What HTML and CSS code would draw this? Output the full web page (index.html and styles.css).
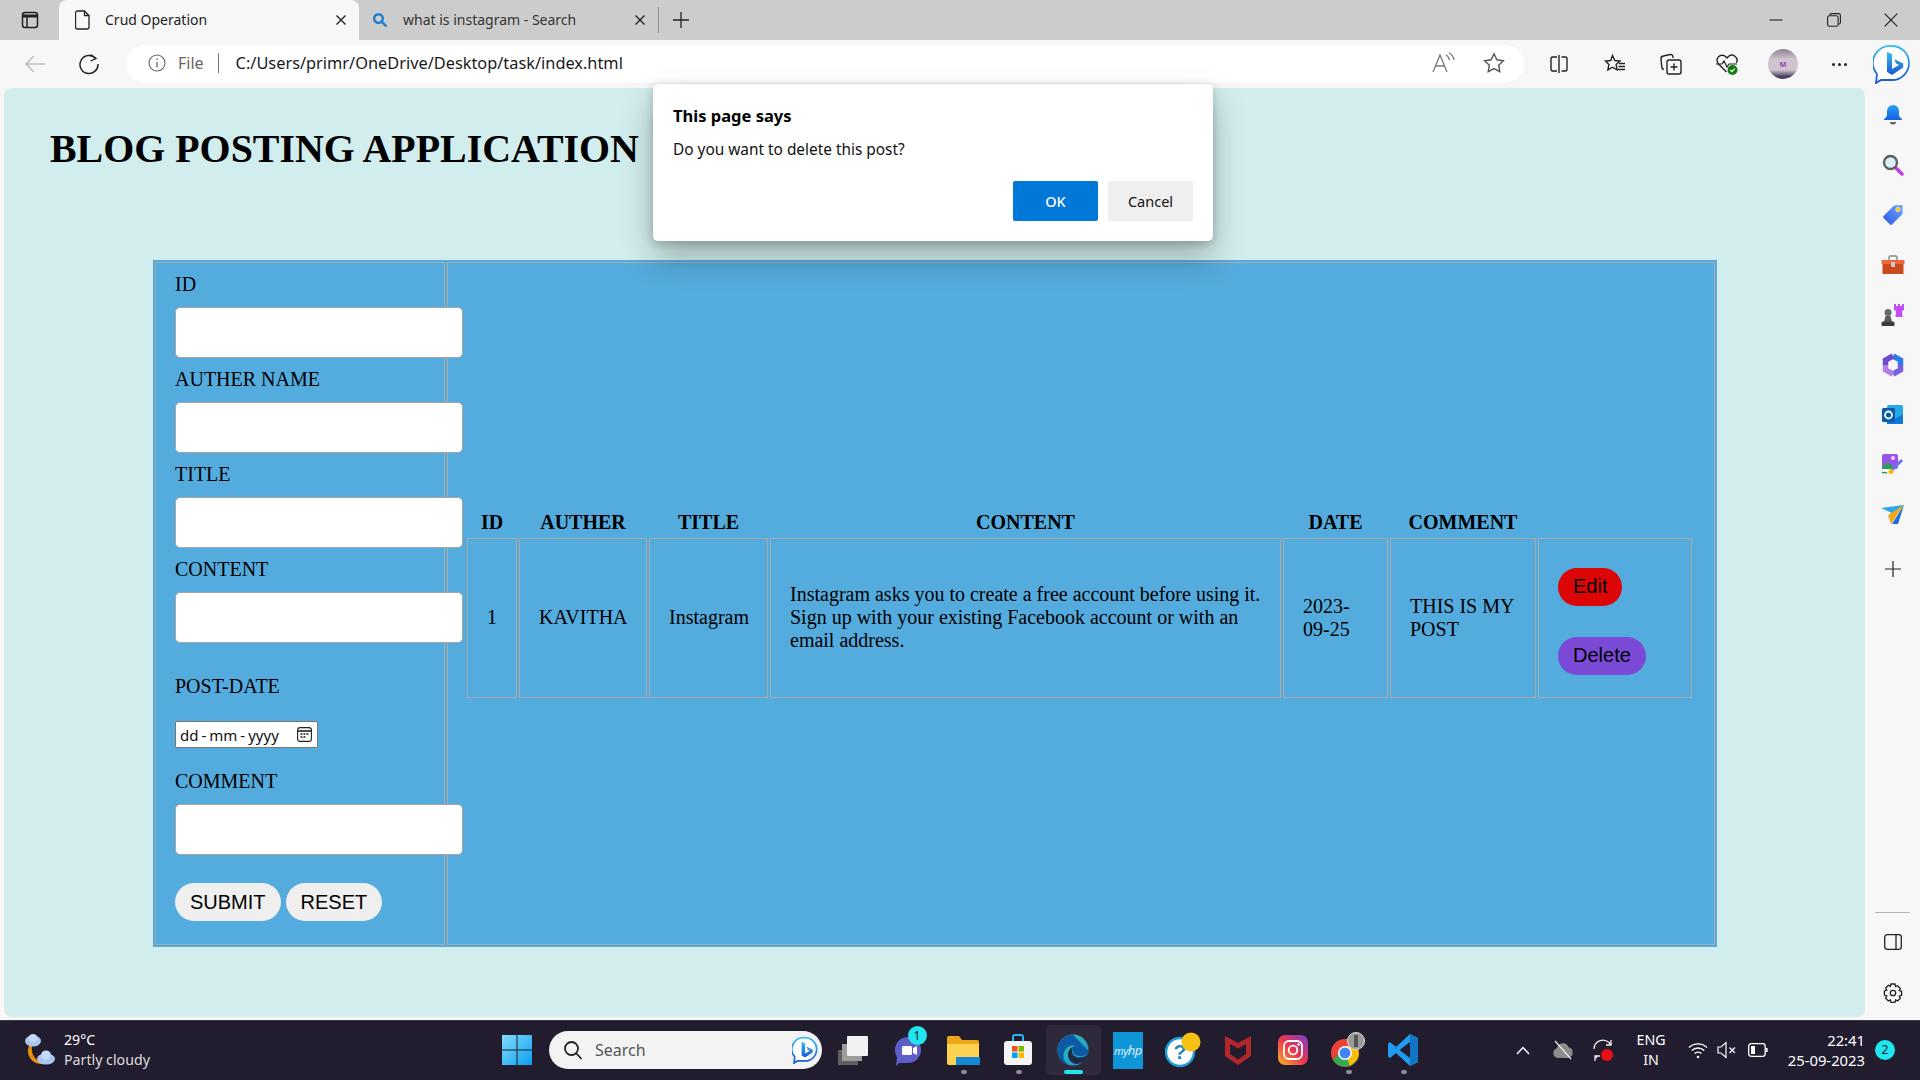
FILE: index.html
```html
<!DOCTYPE html>
<html lang="en">
<head>
    <meta charset="UTF-8">
    <title>Crud Operation</title>
    <link rel="stylesheet" href="styles.css">
</head>
<body>
    <div class="screen">
        <!-- browser tabs -->
        <div class="tabstrip">
            <div class="tab-slot">
                <svg width="18" height="18" viewBox="0 0 18 18" fill="none" stroke="#222" stroke-width="1.5"><rect x="1.5" y="1.5" width="15" height="15" rx="2.5"/><path d="M1.5 5h15" stroke-width="3"/><path d="M6 5v11"/></svg>
            </div>
            <div class="tab tab-active">
                <svg width="16" height="20" viewBox="0 0 16 20" fill="none" stroke="#222" stroke-width="1.3"><path d="M2.5 1h7l4.500 4.500V17a2 2 0 0 1-2 2h-9.500a2 2 0 0 1-2-2V3a2 2 0 0 1 2-2z"/><path d="M9.500 1v4.500H14"/></svg>
                <span class="tab-title">Crud Operation</span>
                <span class="tab-close"><svg width="12" height="12" viewBox="0 0 12 12" stroke="#222" stroke-width="1.4"><path d="M1.500 1.500l9 9M10.500 1.500l-9 9"/></svg></span>
            </div>
            <div class="tab">
                <svg width="16" height="16" viewBox="0 0 16 16" fill="none" stroke="#1c7fd0" stroke-width="2.4"><circle cx="6.500" cy="6.500" r="4.300"/><path d="M10 10l4.500 4.500"/></svg>
                <span class="tab-title tab-title-dim">what is instagram - Search</span>
                <span class="tab-close"><svg width="12" height="12" viewBox="0 0 12 12" stroke="#222" stroke-width="1.4"><path d="M1.500 1.500l9 9M10.500 1.500l-9 9"/></svg></span>
            </div>
            <div class="tab-sep"></div>
            <div class="tab-new"><svg width="18" height="18" viewBox="0 0 18 18" stroke="#222" stroke-width="1.3"><path d="M9 1v16M1 9h16"/></svg></div>
            <div class="win-controls">
                <span class="win-btn"><svg width="14" height="14" viewBox="0 0 14 14" stroke="#222" stroke-width="1.1"><path d="M0.500 7h13"/></svg></span>
                <span class="win-btn"><svg width="14" height="14" viewBox="0 0 14 14" fill="none" stroke="#222" stroke-width="1.1"><rect x="0.600" y="2.800" width="10.500" height="10.500" rx="1.800"/><path d="M3 2.600V2a1.400 1.400 0 0 1 1.400-1.400h7.200A1.800 1.800 0 0 1 13.400 2.400v7.200A1.400 1.400 0 0 1 12 11h-0.700"/></svg></span>
                <span class="win-btn"><svg width="14" height="14" viewBox="0 0 14 14" stroke="#222" stroke-width="1.2"><path d="M0.700 0.700l12.600 12.600M13.300 0.700L0.700 13.300"/></svg></span>
            </div>
        </div>

        <!-- address bar -->
        <div class="toolbar">
            <div class="nav-btn"><svg width="22" height="20" viewBox="0 0 22 20" fill="none" stroke="#bdbdbd" stroke-width="1.5"><path d="M21 10H2M10 2l-8 8 8 8"/></svg></div>
            <div class="nav-btn"><svg width="22" height="22" viewBox="0 0 22 22" fill="none" stroke="#222" stroke-width="1.500"><path d="M17.800 5.600A9 9 0 1 0 20 11"/><path d="M12.500 1.500l5.500 4-5.500 2.500" stroke-width="1.300"/></svg></div>
            <div class="urlbar">
                <svg class="url-info" width="18" height="18" viewBox="0 0 18 18" fill="none" stroke="#666" stroke-width="1.100"><circle cx="9" cy="9" r="8"/><path d="M9 8v5.500M9 4.500v1.500" stroke-width="1.300"/></svg>
                <span class="url-file">File</span>
                <span class="url-sep"></span>
                <span class="url-text">C:/Users/primr/OneDrive/Desktop/task/index.html</span>
                <span class="url-action url-action-first"><svg width="24" height="24" viewBox="0 0 24 24" fill="none" stroke="#777" stroke-width="1.300"><path d="M1 21L8 4l7 17M3.600 15h8.800"/><path d="M14 4c2 1 3 2.500 3.300 5M17 1.800c3 1.700 4.500 4 5 7.200"/></svg></span>
                <span class="url-action"><svg width="22" height="22" viewBox="0 0 22 22" fill="none" stroke="#555" stroke-width="1.400"><path d="M11 1.800l2.900 6 6.500 0.900-4.700 4.500 1.100 6.500-5.800-3.100-5.800 3.100 1.100-6.500L1.600 8.700l6.500-0.900z"/></svg></span>
            </div>
            <div class="tool-btn tool-btn-first"><svg width="20" height="20" viewBox="0 0 20 20" fill="none" stroke="#222" stroke-width="1.400"><path d="M8 3H3.500A1.500 1.500 0 0 0 2 4.500v11A1.500 1.500 0 0 0 3.500 17H8M12.500 3h4A1.500 1.500 0 0 1 18 4.500v11a1.500 1.500 0 0 1-1.500 1.500h-4M10 1v18"/></svg></div>
            <div class="tool-btn"><svg width="22" height="20" viewBox="0 0 22 20" fill="none" stroke="#222" stroke-width="1.400"><path d="M8.500 1.500l2.300 5 5.200 0.600-3.900 3.500 1 5.200-4.600-2.600-4.600 2.600 1-5.200L1.500 7.100l5.200-0.600z"/><path d="M15 9.500h6M14.500 12.500h6.500M14 15.500h7"/></svg></div>
            <div class="tool-btn"><svg width="22" height="22" viewBox="0 0 22 22" fill="none" stroke="#222" stroke-width="1.400"><rect x="7" y="7" width="14" height="14" rx="2"/><path d="M14 10.500v7M10.500 14h7"/><path d="M4 16.500A2.500 2.500 0 0 1 1.800 14L1 6a2.800 2.800 0 0 1 2.500-3l6.500-1.500A2.500 2.500 0 0 1 13 3.500V5"/></svg></div>
            <div class="tool-btn"><svg width="24" height="24" viewBox="0 0 24 24" fill="none" stroke="#222" stroke-width="1.400"><path d="M11.500 20L3.500 12a5.200 5.200 0 0 1 0-7.300 5.200 5.200 0 0 1 7.300 0l1.200 1.300 1.200-1.300a5.200 5.200 0 0 1 8.300 6"/><path d="M1 12h6l2-3 3 6 2-3h8" stroke-width="1.200"/><circle cx="17.500" cy="18" r="5" fill="#107c10" stroke="none"/><path d="M15.200 18l1.700 1.700 2.900-3" stroke="#fff" stroke-width="1.200"/></svg></div>
            <div class="tool-btn"><span class="avatar"><span class="avatar-mark">M</span></span></div>
            <div class="tool-btn"><span class="dots"><i></i><i></i><i></i></span></div>
            <div class="tool-btn tool-btn-last">
                <svg width="38" height="40" viewBox="0 0 38 40" fill="none"><defs><linearGradient id="bingA" x1="0" y1="0" x2="0" y2="1"><stop offset="0" stop-color="#37bdf0"/><stop offset="1" stop-color="#1a55d8"/></linearGradient></defs><path d="M19 2a17 17 0 0 1 0 34H8l-5 3 1-9A17 17 0 0 1 19 2z" fill="#fff" stroke="url(#bingA)" stroke-width="1.800"/><path d="M14 8l5 2v15l7-4-3-1.500-1.800-4.500 9 4.500v4L19 31l-5-3z" fill="url(#bingA)"/></svg>
            </div>
        </div>

        <div class="main-row">
            <!-- the page itself -->
            <div class="page">
                <h1 class="page-title">BLOG POSTING APPLICATION</h1>
                <table class="layout-table">
                    <tr>
                        <td class="form-cell">
                            <label class="field-label">ID</label>
                            <input class="field-input" type="text">
                            <label class="field-label">AUTHER NAME</label>
                            <input class="field-input" type="text">
                            <label class="field-label">TITLE</label>
                            <input class="field-input" type="text">
                            <label class="field-label">CONTENT</label>
                            <input class="field-input" type="text">
                            <label class="field-label field-label-date">POST-DATE</label>
                            <div class="date-input">
                                <span>dd</span><span class="date-dash">-</span><span>mm</span><span class="date-dash">-</span><span>yyyy</span>
                                <svg class="date-icon" width="15" height="15" viewBox="0 0 15 15" fill="none" stroke="#222" stroke-width="1.100"><rect x="0.600" y="0.600" width="13.800" height="13.800" rx="2.500"/><path d="M0.600 4h13.800" stroke-width="1.600"/><path d="M3.500 7h2M6.500 7h2M9.500 7h2M3.500 10h2M6.500 10h2" stroke-width="1.500"/></svg>
                            </div>
                            <label class="field-label">COMMENT</label>
                            <input class="field-input" type="text">
                            <div class="form-actions">
                                <button class="pill-btn">SUBMIT</button>
                                <button class="pill-btn">RESET</button>
                            </div>
                        </td>
                        <td class="list-cell">
                            <table class="post-table">
                                <thead>
                                    <tr>
                                        <th class="col-id">ID</th>
                                        <th class="col-auther">AUTHER</th>
                                        <th class="col-title">TITLE</th>
                                        <th class="col-content">CONTENT</th>
                                        <th class="col-date">DATE</th>
                                        <th class="col-comment">COMMENT</th>
                                        <th class="col-actions"></th>
                                    </tr>
                                </thead>
                                <tbody>
                                    <tr>
                                        <td class="cell-center">1</td>
                                        <td class="cell-center">KAVITHA</td>
                                        <td class="cell-center">Instagram</td>
                                        <td>Instagram asks you to create a free account before using it. Sign up with your existing Facebook account or with an email address.</td>
                                        <td>2023-09-25</td>
                                        <td>THIS IS MY POST</td>
                                        <td class="cell-actions">
                                            <div class="row-actions">
                                                <button class="pill-btn btn-edit">Edit</button>
                                                <button class="pill-btn btn-delete">Delete</button>
                                            </div>
                                        </td>
                                    </tr>
                                </tbody>
                            </table>
                        </td>
                    </tr>
                </table>
            </div>

            <!-- edge sidebar -->
            <div class="sidebar">
                <div class="side-icon"><svg width="20" height="22" viewBox="0 0 20 22"><defs><linearGradient id="bellG" x1="0" y1="0" x2="0" y2="1"><stop offset="0" stop-color="#2aa0f5"/><stop offset="1" stop-color="#1460e0"/></linearGradient></defs><path d="M10 1a6 6 0 0 1 6 6v5l3.500 4h-19L4 12V7a6 6 0 0 1 6-6z" fill="url(#bellG)"/><path d="M7 18h6a3 2.500 0 0 1-6 0z" fill="#666"/></svg></div>
                <div class="side-icon"><svg width="22" height="22" viewBox="0 0 22 22" fill="none"><path d="M13 13l7 7" stroke="#c13ee6" stroke-width="3.500" stroke-linecap="round"/><circle cx="8.500" cy="8.500" r="6.500" fill="#dceefa" stroke="#5f5f5f" stroke-width="2.400"/></svg></div>
                <div class="side-icon"><svg width="22" height="22" viewBox="0 0 22 22"><defs><linearGradient id="tagG" x1="0" y1="1" x2="1" y2="0"><stop offset="0" stop-color="#2e55e8"/><stop offset="1" stop-color="#6fa8f5"/></linearGradient></defs><path d="M1.500 12L12 1.500 20.500 1v9L10 20.500a1.500 1.500 0 0 1-2 0L1.500 14a1.500 1.500 0 0 1 0-2z" fill="url(#tagG)"/><circle cx="16" cy="5.500" r="2.300" fill="#f5c518" stroke="#fff" stroke-width="0.500"/></svg></div>
                <div class="side-icon"><svg width="24" height="20" viewBox="0 0 24 20"><path d="M8 5V2.500A1.500 1.500 0 0 1 9.500 1h5A1.500 1.500 0 0 1 16 2.500V5" fill="none" stroke="#8a8a8a" stroke-width="1.500"/><path d="M0.500 5h23v4H0.500z" fill="#f0653a"/><path d="M1.500 9h21v10h-21z" fill="#c94a1e"/><rect x="10" y="7" width="4" height="5" fill="#c9c9c9"/></svg></div>
                <div class="side-icon"><svg width="24" height="24" viewBox="0 0 24 24"><path d="M13 1h2v2h2V1h2v2h2V1h2v6l-2 1 0.500 6H14.500L15 8l-2-1z" fill="#c24df0"/><circle cx="7" cy="9.500" r="3.500" fill="#6a6a6a"/><path d="M4.500 13h5l1.500 6H3z" fill="#5a5a5a"/><rect x="0.500" y="18.500" width="13" height="4.500" rx="1.500" fill="#3c3c3c"/></svg></div>
                <div class="side-icon"><svg width="22" height="24" viewBox="0 0 22 24" fill="none"><path d="M11 3L18.500 7.200V12" stroke="#2c7de6" stroke-width="5.500"/><path d="M18.500 12v4.800L11 21" stroke="#7a5fe0" stroke-width="5.500"/><path d="M11 21L3.500 16.800V12" stroke="#b27fe6" stroke-width="5.500"/><path d="M3.500 12V7.200L11 3" stroke="#6a4cd0" stroke-width="5.500"/></svg></div>
                <div class="side-icon"><svg width="22" height="22" viewBox="0 0 22 22"><rect x="5" y="1" width="16" height="19" rx="1.500" fill="#28a8ea"/><path d="M5 10l8 5 8-5v10H5z" fill="#0f78d4"/><rect x="0" y="4" width="13" height="14" rx="1.500" fill="#0a5cad"/><circle cx="6.500" cy="11" r="3.500" fill="none" stroke="#fff" stroke-width="1.800"/></svg></div>
                <div class="side-icon"><svg width="24" height="24" viewBox="0 0 24 24"><rect x="1" y="1" width="16" height="15" rx="2" fill="#9a55e8"/><path d="M1 14l6-5 8 7H1z" fill="#2a9d5c"/><circle cx="12" cy="5" r="2" fill="#f3d6ff"/><path d="M22 8L12 18l-2-2L20 6z" fill="#6a70f0"/><circle cx="10" cy="18.500" r="2.500" fill="#f5b60f"/><path d="M1 20c2-2 3 1 5-0.500" fill="none" stroke="#25884f" stroke-width="1.400"/></svg></div>
                <div class="side-icon"><svg width="24" height="20" viewBox="0 0 24 20"><path d="M0 3l23-3-8 10z" fill="#2ca7ee"/><path d="M23 0L7 10l3 9z" fill="#f3a81d"/><path d="M23 0L11 19l6 0z" fill="#1a6fd4"/></svg></div>
                <div class="side-icon side-plus"><svg width="16" height="16" viewBox="0 0 16 16" stroke="#222" stroke-width="1.200"><path d="M8 0v16M0 8h16"/></svg></div>
                <div class="side-bottom">
                    <div class="side-line"></div>
                    <div class="side-icon side-panel"><svg width="18" height="16" viewBox="0 0 18 16" fill="none" stroke="#222" stroke-width="1.300"><rect x="0.700" y="0.700" width="16.600" height="14.600" rx="2.500"/><path d="M12 0.700v14.600"/></svg></div>
                    <div class="side-icon side-panel"><svg width="20" height="20" viewBox="0 0 20 20" fill="none" stroke="#222" stroke-width="1.300"><path d="M8 1h4l0.600 2.600 2-0.900 2.800 2.800-1.200 2 2.400 0.800v4l-2.400 0.800 1.200 2-2.800 2.800-2-1-0.600 2.500H8l-0.600-2.500-2 1-2.800-2.800 1.200-2L1.400 12V8l2.400-0.800-1.200-2 2.800-2.800 2 0.900z"/><circle cx="10" cy="10" r="2.700"/></svg></div>
                </div>
            </div>
        </div>

        <!-- windows taskbar -->
        <div class="taskbar">
            <div class="weather">
                <svg width="32" height="34" viewBox="0 0 32 34"><path d="M12 6a14 14 0 0 0 10 24A13 13 0 1 1 12 6z" fill="#e8900c"/><ellipse cx="9" cy="8" rx="8" ry="5.500" fill="#a9c7ee"/><ellipse cx="9" cy="5" rx="4.500" ry="4" fill="#c6daf5"/><ellipse cx="22" cy="26" rx="9" ry="5.500" fill="#a9c7ee"/><ellipse cx="22" cy="22" rx="5" ry="4.500" fill="#c6daf5"/></svg>
                <div class="weather-text">
                    <span>29°C</span>
                    <span class="weather-desc">Partly cloudy</span>
                </div>
            </div>
            <div class="task-slot">
                <svg width="30" height="30" viewBox="0 0 30 30"><defs><linearGradient id="winG" x1="0" y1="0" x2="1" y2="1"><stop offset="0" stop-color="#7fdcf8"/><stop offset="1" stop-color="#0f9ef0"/></linearGradient></defs><path d="M0 0h14.500v14.500H0zM15.500 0H30v14.500H15.500zM0 15.500h14.500V30H0zM15.500 15.500H30V30H15.500z" fill="url(#winG)"/></svg>
            </div>
            <div class="task-search">
                <svg width="20" height="20" viewBox="0 0 20 20" fill="none" stroke="#222" stroke-width="1.800"><circle cx="8.500" cy="8.500" r="6.500"/><path d="M13 13l5.500 6"/></svg>
                <span class="task-search-text">Search</span>
                <svg class="task-search-bing" width="26" height="28" viewBox="0 0 38 40" fill="none"><defs><linearGradient id="bingB" x1="0" y1="0" x2="0" y2="1"><stop offset="0" stop-color="#37bdf0"/><stop offset="1" stop-color="#1a55d8"/></linearGradient></defs><path d="M19 2a17 17 0 0 1 0 34H8l-5 3 1-9A17 17 0 0 1 19 2z" fill="#fff" stroke="url(#bingB)" stroke-width="2.500"/><path d="M14 8l5 2v15l7-4-3-1.500-1.800-4.500 9 4.500v4L19 31l-5-3z" fill="url(#bingB)"/></svg>
            </div>
            <div class="task-icons">
                <div class="task-slot"><svg width="32" height="30" viewBox="0 0 32 30"><rect x="1" y="15" width="20" height="15" fill="#5f5f5f"/><rect x="5" y="9" width="20" height="17" fill="#9c9c9c"/><rect x="10" y="1" width="21" height="20" rx="1" fill="#f2f2f2"/></svg></div>
                <div class="task-slot">
                    <svg width="30" height="32" viewBox="0 0 30 32"><path d="M15 3a13 13 0 0 1 0 26H6l-3 3 1-9A13 13 0 0 1 15 3z" fill="#5b5fc7"/><rect x="9" y="12" width="10" height="9" rx="1.500" fill="#fff"/><path d="M20 14l4-2v9l-4-2z" fill="#fff"/></svg>
                    <span class="task-badge">1</span>
                </div>
                <div class="task-slot task-running"><svg width="34" height="30" viewBox="0 0 34 30"><path d="M1 3a2 2 0 0 1 2-2h10l3 4h15a2 2 0 0 1 2 2v21H1z" fill="#eda91a"/><path d="M1 9h32v19a2 2 0 0 1-2 2H3a2 2 0 0 1-2-2z" fill="#ffd351"/><path d="M10 22h24v8H10z" fill="#1587d6"/></svg></div>
                <div class="task-slot task-running"><svg width="30" height="32" viewBox="0 0 30 32"><path d="M10 7V3a2 2 0 0 1 2-2h6a2 2 0 0 1 2 2v4" fill="none" stroke="#29b6f6" stroke-width="2"/><rect x="1" y="7" width="28" height="24" rx="3" fill="#f4f4f4"/><rect x="9" y="12" width="5.500" height="5.500" fill="#f25022"/><rect x="15.500" y="12" width="5.500" height="5.500" fill="#7fba00"/><rect x="9" y="18.500" width="5.500" height="5.500" fill="#00a4ef"/><rect x="15.500" y="18.500" width="5.500" height="5.500" fill="#ffb900"/></svg></div>
                <div class="task-slot task-active"><svg width="32" height="32" viewBox="0 0 32 32"><defs><linearGradient id="edgeG" x1="0" y1="0" x2="1" y2="1"><stop offset="0" stop-color="#2fd5a5"/><stop offset="1" stop-color="#1a86d8"/></linearGradient></defs><circle cx="16" cy="16" r="15.500" fill="url(#edgeG)"/><path d="M31.500 17c0 3-3.500 5-8 5-6 0-8-3-8-6 0-2.500 2-5 2-5-6 0-11 4.500-11 11 0 4 2 7 5 8.500C5 30 0.500 24 0.500 16 0.500 7 7.500 0.500 16 0.500" fill="#0c59a4"/><path d="M16 13c-3 1-5 4-5 8 0 4 3 8 8 9 6 0 11-4 12.500-11-2 3-5 4.500-9 4.500-4 0-7.500-2.500-7.500-6 0-2 0.500-3.500 1.500-4.500z" fill="#1f2a44"/></svg></div>
                <div class="task-slot"><div class="hp-logo">my<b>hp</b></div></div>
                <div class="task-slot"><svg width="36" height="36" viewBox="0 0 36 36"><circle cx="15" cy="20" r="14" fill="#fff" stroke="#1e9ad6" stroke-width="2.500"/><text x="15" y="27" font-family="Liberation Sans" font-size="21" font-weight="700" fill="#1e88c8" text-anchor="middle">?</text><circle cx="26" cy="10" r="9.500" fill="#f7c114"/></svg></div>
                <div class="task-slot"><svg width="28" height="32" viewBox="0 0 28 32"><path d="M1 2l13 7 13-7v20L14 31 1 22z" fill="#b3272a"/><path d="M6 10l8 4.500L22 10v10l-8 5.500L6 20z" fill="#241c30"/></svg></div>
                <div class="task-slot"><svg width="30" height="30" viewBox="0 0 30 30" fill="none"><defs><linearGradient id="igG" x1="0" y1="1" x2="1" y2="0"><stop offset="0" stop-color="#fdb52b"/><stop offset="0.500" stop-color="#e8344e"/><stop offset="1" stop-color="#7a3fd1"/></linearGradient></defs><rect width="30" height="30" rx="7" fill="url(#igG)"/><rect x="6" y="6" width="18" height="18" rx="5" stroke="#fff" stroke-width="1.800"/><circle cx="15" cy="15" r="4.300" stroke="#fff" stroke-width="1.800"/><circle cx="20.500" cy="9.500" r="1.200" fill="#fff"/></svg></div>
                <div class="task-slot task-running"><svg width="36" height="36" viewBox="0 0 36 36"><circle cx="15" cy="21" r="14" fill="#ea4335"/><path d="M3 28a14 14 0 0 0 24-0l-6-7H9z" fill="#34a853"/><path d="M15 7a14 14 0 0 1 12 21l-7 6-5-13z" fill="#fbbc05"/><path d="M15 7a14 14 0 0 1 12 7H15z" fill="#ea4335"/><circle cx="15" cy="21" r="7" fill="#fff"/><circle cx="15" cy="21" r="5.500" fill="#4285f4"/><circle cx="26" cy="9" r="8.500" fill="#9a9a9a" stroke="#ddd" stroke-width="1"/><path d="M24 3h4v12h-4z" fill="#555"/></svg></div>
                <div class="task-slot task-running"><svg width="30" height="32" viewBox="0 0 30 32"><path d="M22 0l8 4v24l-8 4-14-13-6 5-2-1.500V9.500L2 8l6 5z" fill="#1f9cf0"/><path d="M22 8L11.500 16 22 24z" fill="#241c30"/><path d="M22 0l8 4v24l-8 4z" fill="#0f75c4"/></svg></div>
            </div>
            <div class="tray">
                <div class="tray-icon tray-wide"><svg width="14" height="9" viewBox="0 0 14 9" fill="none" stroke="#fff" stroke-width="1.500"><path d="M1 8l6-6.500L13 8"/></svg></div>
                <div class="tray-icon tray-wide"><svg width="22" height="20" viewBox="0 0 22 20"><path d="M6 18a5 5 0 0 1-1-9.800 6 6 0 0 1 11.500-1A5.500 5.500 0 0 1 16 18z" fill="#8c8c8c"/><path d="M3 1l16 18" stroke="#e8e8e8" stroke-width="1.300"/></svg></div>
                <div class="tray-icon tray-wide"><svg width="22" height="24" viewBox="0 0 22 24" fill="none" stroke="#eee" stroke-width="1.300"><path d="M2 11a9 9 0 0 1 15-6.500L19 7M19 2v5h-5M5 20l-2-2M3 23v-5h5"/><circle cx="15" cy="17" r="6" fill="#e80f14" stroke="none"/></svg></div>
                <div class="tray-lang"><span>ENG</span><span>IN</span></div>
                <div class="tray-icon tray-wifi"><svg width="20" height="18" viewBox="0 0 20 18" fill="none" stroke="#fff" stroke-width="1.400"><path d="M1 6.500a13 13 0 0 1 18 0M3.800 9.500a9 9 0 0 1 12.400 0M6.600 12.500a5 5 0 0 1 6.800 0"/><circle cx="10" cy="16" r="1.300" fill="#fff" stroke="none"/></svg></div>
                <div class="tray-icon tray-vol"><svg width="20" height="18" viewBox="0 0 20 18" fill="none" stroke="#fff" stroke-width="1.200"><path d="M1 6v6h3l5 4.500v-15L4 6z"/><path d="M12.500 6.500l5.500 5.500M18 6.500L12.500 12"/></svg></div>
                <div class="tray-icon tray-bat"><svg width="20" height="14" viewBox="0 0 20 14" fill="none" stroke="#fff" stroke-width="1.300"><rect x="0.700" y="0.700" width="16.500" height="12.600" rx="2.500"/><rect x="3" y="3" width="4" height="8" fill="#fff" stroke="none"/><path d="M18.800 5v4" stroke-width="1.600"/></svg></div>
                <div class="tray-clock"><span>22:41</span><span>25-09-2023</span></div>
                <span class="tray-badge">2</span>
            </div>
        </div>

        <!-- alert dialog lies over the page -->
        <div class="alert">
            <div class="alert-title">This page says</div>
            <div class="alert-msg">Do you want to delete this post?</div>
            <div class="alert-actions">
                <button class="alert-btn alert-ok">OK</button>
                <button class="alert-btn">Cancel</button>
            </div>
        </div>
    </div>
</body>
</html>
```

FILE: styles.css
```css
* {
    box-sizing: border-box;
}
body {
    margin: 0;
    font-family: "Noto Sans", "Open Sans", sans-serif;
    background: #f7f7f7;
}
.screen {
    position: relative;
    width: 1920px;
    height: 1080px;
    overflow: hidden;
    display: flex;
    flex-direction: column;
}

/* Tabs */
.tabstrip {
    height: 40px;
    background: #cccccc;
    display: flex;
    align-items: center;
    flex-shrink: 0;
}
.tab-slot {
    width: 59px;
    display: flex;
    justify-content: center;
}
.tab {
    width: 299px;
    height: 40px;
    display: flex;
    align-items: center;
    padding: 0 12px 0 13px;
    font-size: 14px;
    line-height: 18px;
    padding-bottom: 1px;
    color: #222;
}
.tab-active {
    width: 300px;
    padding-left: 16px;
    background: #f7f7f7;
    border-radius: 8px 8px 0 0;
}
.tab-title {
    margin-left: 14px;
}
.tab-title-dim {
    margin-left: 15px;
    color: #333;
}
.tab-close {
    margin-left: auto;
    display: flex;
}
.tab-sep {
    width: 1px;
    height: 26px;
    background: #8d8d8d;
}
.tab-new {
    width: 44px;
    display: flex;
    justify-content: center;
}
.win-controls {
    margin-left: auto;
    display: flex;
}
.win-btn {
    width: 57.500px;
    display: flex;
    justify-content: center;
}

/* Address bar */
.toolbar {
    height: 48px;
    background: #f7f7f7;
    display: flex;
    align-items: center;
    padding-left: 8px;
    flex-shrink: 0;
}
.nav-btn {
    width: 54px;
    display: flex;
    justify-content: center;
}
.urlbar {
    width: 1400px;
    height: 38px;
    margin-left: 9px;
    padding: 0 6px 2px 23px;
    background: #fff;
    border-radius: 19px;
    display: flex;
    align-items: center;
    box-shadow: 0 0 2px rgba(0, 0, 0, 0.06);
}
.url-file {
    margin-left: 12px;
    font-size: 16px;
    color: #666;
}
.url-sep {
    width: 1px;
    height: 20px;
    margin: 0 17px 0 14px;
    background: #777;
}
.url-text {
    font-size: 16.350px;
    color: #1a1a1a;
}
.url-action {
    width: 50px;
    display: flex;
    justify-content: center;
}
.url-action-first {
    margin-left: auto;
}
.tool-btn {
    width: 56px;
    display: flex;
    justify-content: center;
}
.tool-btn-first {
    margin-left: 6px;
}
.tool-btn-last {
    width: 50px;
}
.avatar {
    width: 30px;
    height: 30px;
    border-radius: 50%;
    background: radial-gradient(ellipse 60% 50% at 50% 45%, #9a8a9c 0%, #b6a8b8 60%, #d5dcf0 100%);
    background: linear-gradient(180deg, #8f8392 0%, #cfc4cf 35%, #cfc4cf 70%, #4a3d5e 92%);
    display: flex;
    align-items: center;
    justify-content: center;
}
.avatar-mark {
    font-size: 7px;
    font-weight: 700;
    color: #9a3fb0;
}
.dots {
    display: flex;
    gap: 3px;
}
.dots i {
    width: 3px;
    height: 3px;
    border-radius: 50%;
    background: #222;
}

/* Page */
.main-row {
    flex: 1;
    display: flex;
    min-height: 0;
}
.page {
    width: 1861px;
    height: 929px;
    margin-left: 4px;
    padding-top: 36px;
    background: #d2eded;
    border-radius: 8px;
    font-family: "Liberation Serif", "Times New Roman", serif;
    color: #000;
}
.page-title {
    margin: 0 0 0 46px;
    font-size: 39.900px;
    line-height: 50px;
    font-weight: 700;
}
.layout-table {
    width: 1564px;
    margin: 86px 0 0 149px;
    table-layout: fixed;
    border-collapse: separate;
    border-spacing: 2px;
    border: 0;
    background: #54abdd;
    font-size: 20px;
}
.layout-table > tbody > tr > td {
    border: 1px solid #a9a9a9;
    vertical-align: middle;
}
.form-cell {
    width: 290px;
    padding: 10px 0 23px 19px;
}
.field-label {
    display: block;
    line-height: 23px;
    margin-bottom: 10.500px;
}
.field-input {
    display: block;
    width: 288px;
    height: 51px;
    margin-bottom: 10.500px;
    border: 1.500px solid #a5a5a5;
    border-radius: 5px;
    background: #fff;
    position: relative;
}
.field-label-date {
    margin-top: 32px;
    margin-bottom: 23.500px;
}
.date-input {
    width: 143px;
    height: 27px;
    margin-bottom: 22px;
    padding-left: 4px;
    display: flex;
    align-items: center;
    background: #fff;
    border: 1px solid #767676;
    border-radius: 2px;
    font-family: "Noto Sans", sans-serif;
    font-size: 15px;
    color: #111;
}
.date-dash {
    margin: 0 3px;
}
.date-icon {
    margin-left: auto;
    margin-right: 5px;
}
.form-actions {
    display: flex;
    gap: 5px;
    margin-top: 28.500px;
}
.pill-btn {
    height: 38px;
    padding: 0 15px;
    border: 0;
    border-radius: 19px;
    background: #efefef;
    font-family: "Liberation Sans", Arial, sans-serif;
    font-size: 20px;
    color: #000;
}
.list-cell {
    padding: 0 20px 0 17px;
}

/* Posts table */
.post-table {
    width: 100%;
    table-layout: fixed;
    border-collapse: separate;
    border-spacing: 2px;
}
.post-table th {
    height: 26px;
    padding: 0;
    font-weight: 700;
}
.post-table td {
    border: 1px solid #a9a9a9;
    padding: 0 19px;
    vertical-align: middle;
    line-height: 23px;
}
.col-id { width: 50px; }
.col-auther { width: 128px; }
.col-title { width: 119px; }
.col-content { width: 511px; }
.col-date { width: 105px; }
.col-comment { width: 146px; }
.post-table .cell-center {
    text-align: center;
}
.post-table .cell-actions {
    padding: 29px 19px 22px;
}
.row-actions {
    display: flex;
    flex-direction: column;
    align-items: flex-start;
    gap: 31px;
}
.btn-edit {
    background: #dc0606;
}
.btn-delete {
    background: #7a49d6;
}

/* Right side panel */
.sidebar {
    flex: 1;
    padding-top: 2px;
    display: flex;
    flex-direction: column;
    align-items: center;
}
.side-icon {
    height: 50px;
    display: flex;
    align-items: center;
    justify-content: center;
}
.side-plus {
    margin-top: 4px;
}
.side-bottom {
    margin-top: auto;
    width: 100%;
    display: flex;
    flex-direction: column;
    align-items: center;
    padding-bottom: 2px;
}
.side-line {
    width: 35px;
    height: 1px;
    margin-bottom: 3px;
    background: #b5b5b5;
}
.side-panel {
    height: 51px;
}

/* Taskbar */
.taskbar {
    height: 60px;
    flex-shrink: 0;
    display: flex;
    align-items: center;
    padding-left: 24px;
    padding-bottom: 1px;
    background: #221c2f;
    border-top: 1px solid #3b3640;
    color: #fff;
    font-size: 14.200px;
}
.weather {
    width: 465.500px;
    display: flex;
    align-items: center;
    gap: 8px;
}
.weather-text {
    display: flex;
    flex-direction: column;
    line-height: 20px;
}
.weather-desc {
    color: #dcdcdc;
}
.task-slot {
    position: relative;
    width: 55px;
    height: 50px;
    display: flex;
    align-items: center;
    justify-content: center;
}
.task-search {
    width: 273px;
    height: 38px;
    margin: 0 4.500px;
    padding: 0 4px 0 14px;
    display: flex;
    align-items: center;
    background: #f3f3f3;
    border-radius: 19px;
    color: #555;
}
.task-search-text {
    margin-left: 12px;
    font-size: 16px;
}
.task-search-bing {
    margin-left: auto;
}
.task-icons {
    display: flex;
    margin-left: -1px;
}
.task-badge {
    position: absolute;
    top: 1px;
    left: 27px;
    width: 19px;
    height: 19px;
    border-radius: 50%;
    background: #1fe6ef;
    color: #1a1a2a;
    font-size: 12px;
    line-height: 19px;
    text-align: center;
}
.task-running::after {
    content: "";
    position: absolute;
    bottom: 1px;
    left: 25px;
    width: 6px;
    height: 4px;
    border-radius: 2px;
    background: #8f8c95;
}
.task-active {
    background: #2f2a3b;
    border-radius: 5px;
}
.task-active::after {
    content: "";
    position: absolute;
    bottom: 1px;
    left: 18px;
    width: 19px;
    height: 4px;
    border-radius: 2px;
    background: #1fe6ef;
}
.hp-logo {
    width: 30px;
    height: 37px;
    display: flex;
    align-items: center;
    justify-content: center;
    background: #0f96d8;
    color: #dff3fb;
    font-style: italic;
    font-size: 11px;
    letter-spacing: -0.5px;
}
.hp-logo b {
    font-weight: 400;
    font-size: 13px;
}
.tray {
    margin-left: auto;
    display: flex;
    align-items: center;
    padding-right: 25px;
    color: #fff;
}
.tray-icon {
    display: flex;
    justify-content: center;
}
.tray-wide {
    width: 40px;
}
.tray-lang {
    width: 48px;
    margin: 0 9px 0 4px;
    display: flex;
    flex-direction: column;
    align-items: center;
    line-height: 20px;
}
.tray-wifi {
    width: 28px;
}
.tray-vol {
    width: 30px;
}
.tray-bat {
    width: 32px;
}
.tray-clock {
    width: 91px;
    display: flex;
    flex-direction: column;
    align-items: flex-end;
    line-height: 20px;
    font-size: 14.800px;
}
.tray-badge {
    width: 20px;
    height: 20px;
    margin-left: 10px;
    border-radius: 50%;
    background: #1fe6ef;
    color: #1a1a2a;
    font-size: 12px;
    line-height: 20px;
    text-align: center;
}

/* Alert */
.alert {
    position: absolute;
    top: 84px;
    left: 653px;
    width: 560px;
    height: 157px;
    padding: 20px 20px 0;
    background: #fff;
    border-radius: 5px;
    box-shadow: 0 16px 32px rgba(0, 0, 0, 0.27), 0 2px 8px rgba(0, 0, 0, 0.18);
}
.alert-title {
    font-size: 16.500px;
    font-weight: 700;
    line-height: 24px;
    color: #000;
}
.alert-msg {
    margin-top: 12px;
    font-size: 15.400px;
    line-height: 20px;
    color: #111;
}
.alert-actions {
    margin-top: 20.500px;
    display: flex;
    justify-content: flex-end;
    gap: 10px;
}
.alert-btn {
    width: 85px;
    height: 40px;
    border: 0;
    border-radius: 2px;
    background: #efefef;
    font-family: inherit;
    font-size: 14.500px;
    color: #111;
}
.alert-ok {
    background: #0078d7;
    color: #fff;
    font-weight: 500;
}
```
